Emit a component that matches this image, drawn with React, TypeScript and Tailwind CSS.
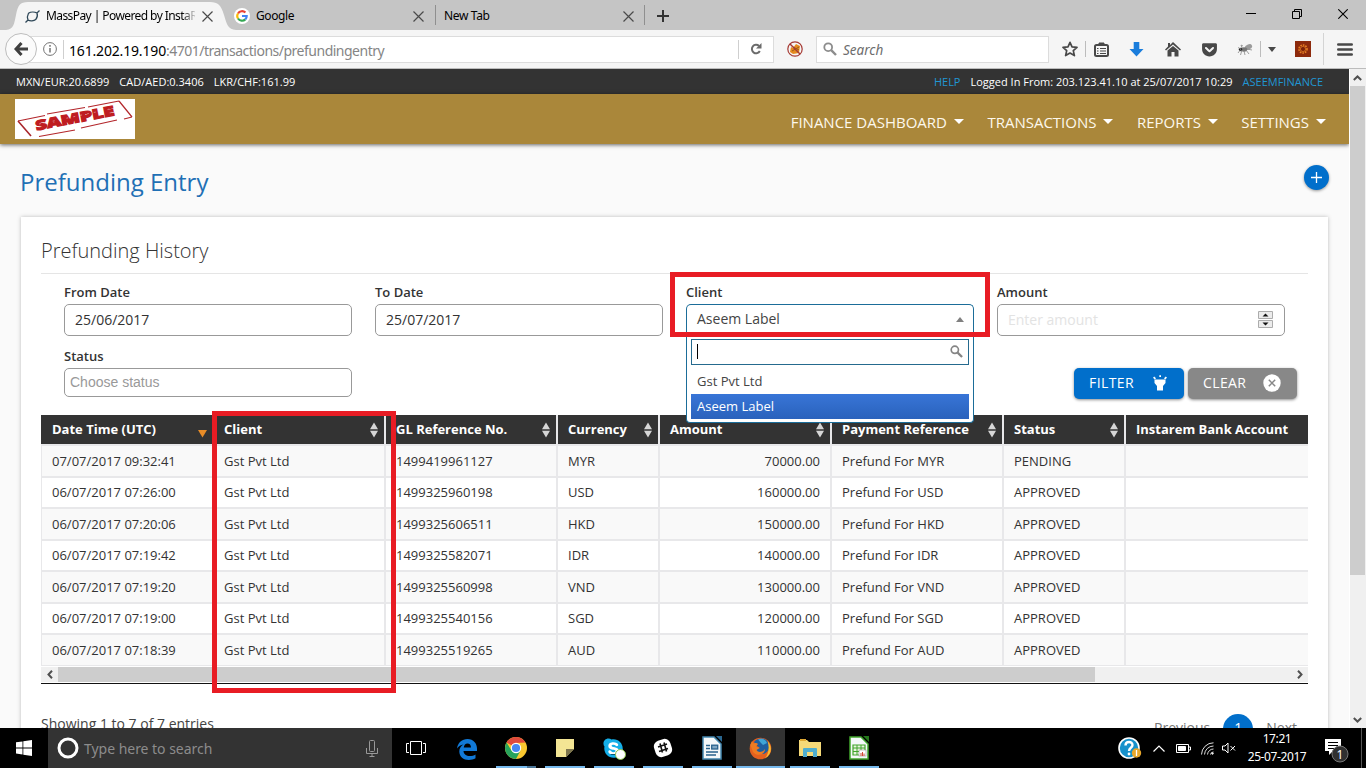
import type { ReactNode } from "react";
import { FaSkype, FaGetPocket } from "react-icons/fa";

type Column = { name: string; width: string; sort: "both" | "desc" | "none"; right?: boolean };

const columns: Column[] = [
  { name: "Date Time (UTC)", width: "w-[171px] border-l pl-[10px]", sort: "desc" },
  { name: "Client", width: "w-[172px] border-l-2 pl-[10px]", sort: "both" },
  { name: "GL Reference No.", width: "w-[172px] border-l-2 pl-[10px]", sort: "both" },
  { name: "Currency", width: "w-[102px] border-l-2 pl-[10px]", sort: "both" },
  { name: "Amount", width: "w-[172px] border-l-2 pl-[10px]", sort: "both", right: true },
  { name: "Payment Reference", width: "w-[172px] border-l-2 pl-[10px]", sort: "both" },
  { name: "Status", width: "w-[122px] border-l-2 pl-[10px]", sort: "both" },
  { name: "Instarem Bank Account", width: "flex-1 border-l-2 pl-[10px]", sort: "none" },
];

const entries = [
  ["07/07/2017 09:32:41", "Gst Pvt Ltd", "1499419961127", "MYR", "70000.00", "Prefund For MYR", "PENDING", ""],
  ["06/07/2017 07:26:00", "Gst Pvt Ltd", "1499325960198", "USD", "160000.00", "Prefund For USD", "APPROVED", ""],
  ["06/07/2017 07:20:06", "Gst Pvt Ltd", "1499325606511", "HKD", "150000.00", "Prefund For HKD", "APPROVED", ""],
  ["06/07/2017 07:19:42", "Gst Pvt Ltd", "1499325582071", "IDR", "140000.00", "Prefund For IDR", "APPROVED", ""],
  ["06/07/2017 07:19:20", "Gst Pvt Ltd", "1499325560998", "VND", "130000.00", "Prefund For VND", "APPROVED", ""],
  ["06/07/2017 07:19:00", "Gst Pvt Ltd", "1499325540156", "SGD", "120000.00", "Prefund For SGD", "APPROVED", ""],
  ["06/07/2017 07:18:39", "Gst Pvt Ltd", "1499325519265", "AUD", "110000.00", "Prefund For AUD", "APPROVED", ""],
];

function CloseX({ className = "" }: { className?: string }) {
  return (
    <svg className={`shrink-0 ${className}`} width="11" height="11" viewBox="0 0 11 11" stroke="#4a4a4a" strokeWidth="1.2">
      <path d="M.5.5l10 10M10.5.5l-10 10" />
    </svg>
  );
}

function Magnifier({ size, color }: { size: number; color: string }) {
  return (
    <svg className="shrink-0" width={size} height={size} viewBox="0 0 14 14" fill="none" stroke={color}>
      <circle cx="5.2" cy="5.2" r="3.9" strokeWidth="1.8" />
      <path d="M8.2 8.2l4.8 4.8" strokeWidth="2.4" />
    </svg>
  );
}

function TabStrip() {
  return (
    <div className="flex h-[30px] shrink-0 bg-[#c5c5c5] text-[12px] text-black">
      <div className="relative flex w-[232px] items-center pt-[2px]">
        <svg className="absolute left-0 top-0" width="240" height="30" viewBox="0 0 240 30">
          <path d="M6 30C14 29 14 24 16 15C18 5 20 2 28 2H210C218 2 221 5 224 15C227 25 228 29 236 30Z" fill="#f5f5f5" />
        </svg>
        <svg className="relative ml-[25px]" width="15" height="13" viewBox="0 0 15 13" fill="none" stroke="#2f4858" strokeWidth="1.3">
          <path d="M14.5 .5L12 3C10 2 6 1.500 3.500 3.200C2.500 5 2.300 8 3 10L.5 12.500M3 10C5 11.300 9 11 10.700 9.600C12 8 12.700 5 12 3" />
        </svg>
        <div className="relative ml-[6px] w-[149px] overflow-hidden whitespace-nowrap tracking-[-0.58px] [mask-image:linear-gradient(to_right,black_136px,transparent_151px)]">
          MassPay | Powered by InstaReM
        </div>
        <CloseX className="relative ml-[7px]" />
      </div>
      <div className="flex w-[203px] items-center pl-[2px] pt-[2px]">
        <span className="flex h-4 w-4 items-center justify-center rounded-full bg-white">
          <svg width="12" height="12" viewBox="0 0 12 12" fill="none" strokeWidth="2.200">
            <path d="M2 3.500A4.700 4.700 0 0 1 9.400 2.600" stroke="#ea4335" />
            <path d="M2 3.500A4.700 4.700 0 0 0 2 8.500" stroke="#fbbc05" />
            <path d="M2 8.500A4.700 4.700 0 0 0 9.300 9.400" stroke="#34a853" />
            <path d="M6 6H10.700A4.700 4.700 0 0 1 9.300 9.400" stroke="#4285f4" />
          </svg>
        </span>
        <span className="ml-[6px] flex-1 tracking-[-0.4px]">Google</span>
        <CloseX className="mr-[11px]" />
      </div>
      <div className="my-[5px] w-px bg-[#8f8f8f]" />
      <div className="flex w-[208px] items-center pl-[8px] pt-[2px]">
        <span className="flex-1 tracking-[-0.35px]">New Tab</span>
        <CloseX className="mr-[10px]" />
      </div>
      <div className="my-[5px] w-px bg-[#8f8f8f]" />
      <div className="flex flex-1 items-center pl-[12px] pt-[2px]">
        <svg width="12" height="12" viewBox="0 0 12 12" stroke="#333" strokeWidth="2"><path d="M6 0V12M0 6H12" /></svg>
      </div>
      <div className="flex items-start gap-[36px] pr-[18px] pt-[9px]">
        <svg width="10" height="10" viewBox="0 0 10 10" stroke="#000"><path d="M0 4.500H10" /></svg>
        <svg width="10" height="10" viewBox="0 0 10 10" fill="none" stroke="#000"><path d="M.5 2.500H7.500V9.500H.5ZM2.500 2.500V.5H9.500V7.500H7.500" /></svg>
        <svg width="10" height="10" viewBox="0 0 10 10" stroke="#000" strokeWidth="1.100"><path d="M.3.3L9.700 9.700M9.700.3L.3 9.700" /></svg>
      </div>
    </div>
  );
}

function Toolbar() {
  return (
    <div className="flex h-[39px] shrink-0 items-center border-b border-[#bcbcbc] bg-[#f5f5f5]">
      <div className="relative z-10 ml-[5px] flex h-8 w-8 items-center justify-center rounded-full border border-[#bdbdbd] bg-[#fbfbfb]">
        <svg width="14" height="14" viewBox="0 0 14 14" fill="none" stroke="#404040" strokeWidth="3"><path d="M7.500 1L2 7L7.500 13M2 7H14" /></svg>
      </div>
      <div className="-ml-[17px] flex h-[27px] w-[754px] items-center border border-[#dcdcdc] bg-white pl-[22px]">
        <svg width="14" height="14" viewBox="0 0 14 14" fill="none" stroke="#737373"><circle cx="7" cy="7" r="6.400" /><path d="M7 6V10.500M7 3V4.800" strokeWidth="1.500" /></svg>
        <div className="ml-[6px] h-[19px] w-px bg-[#cfcfcf]" />
        <div className="ml-[5px] flex-1 whitespace-nowrap pt-[2px] text-[14px] tracking-[-0.5px] text-[#858585]">
          <span className="tracking-[-0.17px] text-black">161.202.19.190</span>:4701/transactions/prefundingentry
        </div>
        <div className="h-[19px] w-px bg-[#cfcfcf]" />
        <svg className="mx-[11px]" width="12" height="12" viewBox="0 0 12 12"><path d="M9.800 8A4.200 4.200 0 1 1 9 3" fill="none" stroke="#6b6b6b" strokeWidth="2" /><path d="M11.500 0V5.500H6Z" fill="#6b6b6b" /></svg>
      </div>
      <svg className="ml-[13px]" width="16" height="16" viewBox="0 0 16 16">
        <path d="M4 6L6 7L9 3L13 5L12 12L6 13L3 11Z" fill="#e58a1f" /><path d="M6 6L12 9M5 10L12 6" stroke="#9a5a15" />
        <circle cx="8" cy="8" r="7.200" fill="none" stroke="#a63a34" strokeWidth="1.200" /><path d="M3 3L13 13" stroke="#a63a34" strokeWidth="1.400" />
      </svg>
      <div className="ml-[13px] flex h-[27px] w-[233px] items-center border border-[#dcdcdc] bg-white pl-[6px]">
        <Magnifier size={14} color="#8c8c8c" />
        <span className="ml-[6px] pt-[2px] text-[13.5px] italic text-[#6d6d6d]">Search</span>
      </div>
      <svg className="ml-[13px]" width="16" height="16" viewBox="0 0 16 16" fill="none" stroke="#484848" strokeWidth="1.700" strokeLinejoin="round"><path d="M8 1.300L10 5.800L15 6.300L11.300 9.600L12.400 14.600L8 12L3.600 14.600L4.700 9.600L1 6.300L6 5.800Z" /></svg>
      <div className="ml-[7px] h-4 w-px bg-[#bcbcbc]" />
      <svg className="ml-[8px]" width="15" height="15" viewBox="0 0 15 15" fill="none" stroke="#484848"><rect x="1" y="3" width="13" height="11" rx="1.500" strokeWidth="2" /><path d="M5 1H10V3H5Z" fill="#484848" /><path d="M3 6.500H4.500M6 6.500H12M3 9H4.500M6 9H12M3 11.500H4.500M6 11.500H12" strokeWidth="1.100" /></svg>
      <svg className="ml-[20px]" width="15" height="15" viewBox="0 0 15 15" fill="#1a7ddc"><path d="M4.700 0H10.300V7H14.500L7.500 14.500L.5 7H4.700Z" /></svg>
      <svg className="ml-[21px]" width="16" height="15" viewBox="0 0 16 15" fill="#484848"><path d="M8 0L16 7.500L15 8.500L8 2.500L1 8.500L0 7.500L3 4.600V1H5V3Z" /><path d="M8 4L13.500 8.500V14.500H9.500V10H6.500V14.500H2.500V8.500Z" /></svg>
      <FaGetPocket className="ml-[20px]" size={17} color="#484848" />
      <svg className="ml-[19px]" width="16" height="13" viewBox="0 0 16 13"><ellipse cx="11.500" cy="4" rx="3.800" ry="2.600" fill="#9b9b9b" transform="rotate(-25 11.500 4)" /><ellipse cx="7" cy="6.500" rx="3.200" ry="2.200" fill="#777" /><circle cx="3.500" cy="6.500" r="1.700" fill="#222" /><path d="M1 4.500L4 6L1 10M5 7L3.500 12M7 8L8 12M9 7L12 11M5 5L4 2L6 3M10 6L15 7" fill="none" stroke="#888" strokeWidth=".8" /></svg>
      <div className="ml-[7px] h-4 w-px bg-[#bcbcbc]" />
      <svg className="ml-[7px]" width="8" height="5" viewBox="0 0 8 5" fill="#484848"><path d="M0 0H8L4 5Z" /></svg>
      <svg className="ml-[19px]" width="16" height="16" viewBox="0 0 16 16"><rect width="16" height="16" fill="#8d2a0c" /><circle cx="8" cy="8" r="4" fill="none" stroke="#e98124" strokeWidth="1.600" strokeDasharray="1.600 1" /><circle cx="8" cy="8" r="2.600" fill="#7b2108" stroke="#e98124" strokeWidth=".7" /></svg>
      <div className="ml-[12px] h-8 w-px bg-[#d4d4d4]" />
      <svg className="ml-[13px]" width="16" height="13" viewBox="0 0 16 13" stroke="#484848" strokeWidth="2.600" strokeLinecap="round"><path d="M1.300 1.500H14.700M1.300 6.500H14.700M1.300 11.500H14.700" /></svg>
    </div>
  );
}

function SiteHeader() {
  return (
    <header className="shrink-0">
      <div className="flex h-[25px] items-center bg-[#333] px-4 pt-[2px] text-[11px] text-white">
        <div className="flex flex-1 gap-[10px] whitespace-nowrap tracking-[0.02px]">
          <span>MXN/EUR:20.6899</span><span>CAD/AED:0.3406</span><span>LKR/CHF:161.99</span>
        </div>
        <div className="mr-[10px] flex gap-[10px] whitespace-nowrap">
          <span className="text-[#2196d3]">HELP</span>
          <span>Logged In From: 203.123.41.10 at 25/07/2017 10:29</span>
          <span className="text-[#2196d3]">ASEEMFINANCE</span>
        </div>
      </div>
      <div className="relative flex h-[50px] items-center bg-[#aa873a] pl-[15px] pr-[23px] shadow-[0_1px_4px_rgba(0,0,0,0.6)]">
        <svg width="120" height="40" viewBox="0 0 120 40">
          <rect width="120" height="40" fill="#fff" />
          <path d="M3 22L30 16.500M32 15L70 8.500M73 8L104 2M104 2L117 18M117 18L109 20M102 21L66 29M60 31L24 37.500" fill="none" stroke="#b3262b" strokeWidth="1.200" />
          <path d="M3 22L16 37" stroke="#a8252a" strokeWidth="1.600" />
          <text x="21.500" y="31.500" transform="rotate(-11 21.500 31.500)" fill="#bf1c21" stroke="#bf1c21" strokeWidth="1.100" fontFamily="Open Sans, sans-serif" fontWeight="800" fontSize="13.500" textLength="80" lengthAdjust="spacingAndGlyphs">SAMPLE</text>
          <path d="M24 25L100 9" stroke="#fff" strokeWidth=".4" strokeDasharray="2 5" />
        </svg>
        <nav className="mt-[7px] flex flex-1 justify-end gap-[23.400px] text-[15px] text-[#fdf8ec]">
          {["FINANCE DASHBOARD", "TRANSACTIONS", "REPORTS", "SETTINGS"].map((item) => (
            <div key={item} className="flex items-center">
              <span>{item}</span>
              <svg className="-mt-[2px] ml-[7px]" width="10" height="5" viewBox="0 0 10 5" fill="#fff"><path d="M0 0H10L5 5Z" /></svg>
            </div>
          ))}
        </nav>
      </div>
    </header>
  );
}

function Field({ label, children }: { label: string; children: ReactNode }) {
  return (
    <div className="w-[288px]">
      <div className="h-[20px] text-[13px] font-semibold leading-[16px] text-[#333]">{label}</div>
      {children}
    </div>
  );
}

function Filters() {
  return (
    <div className="px-[23px] pt-[10px]">
      <div className="flex gap-[23px]">
        <Field label="From Date">
          <div className="flex h-[32px] items-center rounded-[5px] border border-[#999] pb-[2px] pl-[10px] text-[14px] text-[#333]">25/06/2017</div>
        </Field>
        <Field label="To Date">
          <div className="flex h-[32px] items-center rounded-[5px] border border-[#999] pb-[2px] pl-[10px] text-[14px] text-[#333]">25/07/2017</div>
        </Field>
        <Field label="Client">
          <div className="relative">
            <div className="flex h-[32px] items-center rounded-t-[5px] border border-b-0 border-[#1b6d99] pb-[2px] pl-[10px] pr-[9px] text-[14px] text-[#444]">
              <span className="-mt-[2px] flex-1">Aseem Label</span>
              <svg width="8" height="5" viewBox="0 0 8 5" fill="#808080"><path d="M0 5H8L4 0Z" /></svg>
            </div>
            <div className="absolute left-0 top-[32px] z-20 h-[87px] w-full rounded-b-[4px] border border-t-0 border-[#1b6d99] bg-white px-[4px] pt-[3px] text-[13px] text-[#444]">
              <div className="flex h-[26px] items-center border border-[#256a8e] pb-[2px] pl-[5px] pr-[5px]">
                <div className="h-[15px] w-px bg-black" />
                <div className="flex-1" />
                <Magnifier size={13} color="#858585" />
              </div>
              <div className="mt-[4px] flex h-[25px] items-center pl-[6px]">Gst Pvt Ltd</div>
              <div className="flex h-[25px] items-center bg-linear-to-b from-[#3875d7] to-[#2a62bc] pl-[6px] text-white">Aseem Label</div>
            </div>
          </div>
        </Field>
        <Field label="Amount">
          <div className="flex h-[32px] items-center rounded-[5px] border border-[#999] pb-[2px] pl-[10px] pr-[11px] text-[14px] text-[#e3e3e3]">
            <span className="flex-1">Enter amount</span>
            <svg className="mt-px" width="15" height="17" viewBox="0 0 15 17"><path d="M.5 .5H14.500V7.500H.5ZM.5 9.500H14.500V16.500H.5Z" fill="#ececec" stroke="#acacac" /><path d="M4.500 5.500H10.500L7.500 2.500ZM4.500 11.500H10.500L7.500 14.500Z" fill="#111" /></svg>
          </div>
        </Field>
      </div>
      <div className="mt-[12px] flex justify-between">
        <Field label="Status">
          <div className="flex h-[29px] items-center rounded-[5px] border border-[#999] pl-[5px] font-['Liberation_Sans'] text-[14px] text-[#999]">Choose status</div>
        </Field>
        <div className="-mr-[12px] mt-[20px] flex gap-[4px] text-[14px] tracking-[0.4px] text-white">
          <div className="flex h-[31px] w-[110px] items-center justify-between rounded-[5px] bg-[#016fcb] pb-[2px] pl-[15px] pr-[17px] shadow-[0_1px_3px_rgba(0,0,0,0.45)]">
            FILTER
            <svg width="14" height="16" viewBox="0 0 14 16" fill="#fff"><path d="M1.500 4.500H12.500V8L10 11V15.500H4V11L1.500 8Z" /><path d="M6.300 .3h1.700v1.700h-1.700ZM0 2.700L1.200 1.500L3 3.300L1.800 4.500ZM14 2.700L12.800 1.500L11 3.300L12.200 4.500Z" /></svg>
          </div>
          <div className="flex h-[31px] w-[109px] items-center justify-between rounded-[5px] bg-[#888] pb-[2px] pl-[15px] pr-[16px] shadow-[0_1px_3px_rgba(0,0,0,0.45)]">
            CLEAR
            <svg width="18" height="18" viewBox="0 0 18 18"><circle cx="9" cy="9" r="8.700" fill="#fff" /><path d="M5.800 5.800L12.200 12.200M12.200 5.800L5.800 12.200" stroke="#888" strokeWidth="1.500" /></svg>
          </div>
        </div>
      </div>
    </div>
  );
}

function EntriesTable() {
  return (
    <div className="mt-[16px] text-[13px]">
      <div className="flex h-[29px] bg-[#333] font-bold text-white">
        {columns.map((c) => (
          <div key={c.name} className={`flex shrink-0 items-center whitespace-nowrap ${c.name.startsWith("Date") ? "border-[#333]" : "border-[#e8e8ea]"} ${c.width}`}>
            <span className="flex-1">{c.name}</span>
            {c.sort === "both" && (
              <svg className="mr-[5px]" width="10" height="16" viewBox="0 0 10 16" fill="#d6d6d6"><path d="M1 7.200H9L5 .5ZM1 8.800H9L5 15.500Z" /></svg>
            )}
            {c.sort === "desc" && (
              <svg className="mr-[5px] mt-[8px]" width="9" height="8" viewBox="0 0 9 8" fill="#e88c27"><path d="M0 0H9L4.500 7.500Z" /></svg>
            )}
          </div>
        ))}
      </div>
      <div className="h-[2px] bg-[#e8e8ea]" />
      {entries.map((row, r) => (
        <div
          key={row[0]}
          className={`flex border-[#e8e8ea] text-[#333] ${r === 6 ? "h-[31px] border-b" : r % 2 ? "h-[31px] border-b-2" : "h-[32px] border-b-2"} ${r % 2 ? "bg-white" : "bg-[#f9f9f9]"}`}
        >
          {row.map((cell, i) => (
            <div key={i} className={`flex shrink-0 items-center whitespace-nowrap border-[#e8e8ea] ${r % 2 ? "" : "pt-px"} ${columns[i].width} ${columns[i].right ? "justify-end pr-[10px]" : ""}`}>
              {cell}
            </div>
          ))}
        </div>
      ))}
      <div className="mt-px flex h-[15px] items-center bg-[#f0f0f0]">
        <div className="flex w-[17px] justify-center">
          <svg width="6" height="9" viewBox="0 0 6 9" fill="none" stroke="#505050" strokeWidth="2"><path d="M5 .8L1.500 4.500L5 8.200" /></svg>
        </div>
        <div className="h-full w-[1037px] bg-[#cdcdcd]" />
        <div className="flex flex-1 justify-end pr-[5px]">
          <svg width="6" height="9" viewBox="0 0 6 9" fill="none" stroke="#505050" strokeWidth="2"><path d="M1 .8L4.500 4.500L1 8.200" /></svg>
        </div>
      </div>
      <div className="mt-px h-px bg-[#111]" />
    </div>
  );
}

function Page() {
  return (
    <div className="flex min-h-0 flex-1">
      <div className="flex w-[1349px] flex-col overflow-hidden bg-[#fafafa]">
        <SiteHeader />
        <div className="flex h-[73px] shrink-0 justify-between pl-5 pr-5">
          <h1 className="mt-[22px] text-[24px] leading-[32px] text-[#1f70b5]">Prefunding Entry</h1>
          <div className="mt-[21px] flex h-[25px] w-[25px] items-center justify-center rounded-full bg-[#016fcb] shadow-[0_1px_3px_rgba(0,0,0,0.4)]">
            <svg width="11" height="11" viewBox="0 0 11 11" stroke="#fff" strokeWidth="1.300"><path d="M5.500 0V11M0 5.500H11" /></svg>
          </div>
        </div>
        <section className="ml-[21px] h-[560px] w-[1307px] shrink-0 bg-white pl-[20px] pr-[20px] shadow-[0_0_4px_rgba(0,0,0,0.25)]">
          <h2 className="h-[57px] border-b border-[#e5e5e5] pt-[19px] text-[20px] font-light leading-[30px] text-[#333]">Prefunding History</h2>
          <Filters />
          <EntriesTable />
          <div className="mt-[29px] flex justify-between text-[14px] text-[#444]">
            <span className="leading-[22px]">Showing 1 to 7 of 7 entries</span>
            <div className="mr-[11px] mt-[1px] flex h-[30px] items-center text-[14px] text-[#757575]">
              <span className="pb-[4px]">Previous</span>
              <span className="mx-[13px] flex h-[30px] w-[30px] items-center justify-center rounded-full bg-[#016fcb] pb-[3px] text-white">1</span>
              <span className="pb-[4px]">Next</span>
            </div>
          </div>
        </section>
      </div>
      <div className="flex flex-1 flex-col items-center border-l border-white bg-[#f0f0f0] pr-px">
        <svg className="mt-[6px] shrink-0" width="9" height="6" viewBox="0 0 9 6" fill="none" stroke="#505050" strokeWidth="2"><path d="M.8 5L4.500 1.500L8.200 5" /></svg>
        <div className="mt-[5px] h-[489px] w-full bg-[#cdcdcd]" />
        <svg className="mb-[5px] mt-auto shrink-0" width="9" height="6" viewBox="0 0 9 6" fill="none" stroke="#505050" strokeWidth="2"><path d="M.8 1L4.500 4.500L8.200 1" /></svg>
      </div>
    </div>
  );
}

function DocIcon({ color, fill, sheet }: { color: string; fill: string; sheet?: boolean }) {
  return (
    <svg width="20" height="24" viewBox="0 0 20 24">
      <path d="M1 1H12L19 8V23H1Z" fill="#f4f8f9" stroke={color} strokeWidth="1.500" />
      <path d="M14 0H20V6Z" fill={fill} />
      {sheet ? (
        <>
          <path d="M4 9H16V19H4Z" fill="#e8f5df" stroke={color} strokeWidth="1.200" /><path d="M4 12H16M4 15.500H16M8 9V19M12 9V19" stroke={color} />
          <rect x="10" y="14" width="7" height="6" fill="#fff" stroke="#999" strokeWidth=".6" /><path d="M12 20V17M13.500 20V16M15 20V17.500" stroke="#d14b36" />
        </>
      ) : (
        <><path d="M4 9.500H8M4 12.500H8M4 16H16M4 19H14" stroke="#28628c" strokeWidth="1.500" /><rect x="9.700" y="9.200" width="6" height="3.800" fill="#7fa6c2" stroke="#28628c" strokeWidth="1.300" /></>
      )}
    </svg>
  );
}

function TaskItem({ children, underline = true, active = false, stacked = false }: { children: ReactNode; underline?: boolean; active?: boolean; stacked?: boolean }) {
  return (
    <div className={`flex h-full w-[49px] flex-col items-center ${active ? "bg-[#333]" : ""}`}>
      <div className="flex flex-1 items-center pt-[2px]">{children}</div>
      {underline && (
        <div className={`flex h-[2px] justify-end bg-[#76b9ed] ${active ? "w-full" : "w-[40px]"}`}>
          {stacked && <div className="h-full w-[9px] bg-[#4b7698]" />}
        </div>
      )}
    </div>
  );
}

function Taskbar() {
  return (
    <div className="flex h-[40px] shrink-0 items-center bg-black text-white">
      <div className="flex w-[48px] justify-center">
        <svg width="16" height="16" viewBox="0 0 16 16" fill="#fff"><path d="M0 2.300L6.500 1.400V7.500H0ZM7.300 1.300L16 0V7.500H7.300ZM0 8.400H6.500V14.500L0 13.600ZM7.300 8.400H16V16L7.300 14.700Z" /></svg>
      </div>
      <div className="flex h-full w-[344px] items-center bg-[#333] pl-[9px] pr-[14px]">
        <svg width="22" height="22" viewBox="0 0 22 22" fill="none"><circle cx="11" cy="11" r="9" stroke="#fff" strokeWidth="3" /></svg>
        <span className="ml-[5px] flex-1 text-[14px] tracking-[-0.03px] text-[#8c8c8c]">Type here to search</span>
        <svg width="12" height="17" viewBox="0 0 12 17" fill="none" stroke="#999"><rect x="3.500" y=".5" width="5" height="11" rx="1" /><path d="M.5 8V13.500H11.500V8M6 13.500V16M3.500 16.500H8.500" /></svg>
      </div>
      <div className="flex w-[50px] pl-[14px]">
        <svg width="20" height="14" viewBox="0 0 20 14" fill="none" stroke="#fff"><path d="M4.500.5H15.500V13.500H4.500ZM3 2.500H.5V11.500H3M17 2.500H19.500V11.500H17" /></svg>
      </div>
      <TaskItem underline={false}>
        <svg width="20" height="21" viewBox="0 0 20 21" fill="#1179d7"><path d="M0 9.500C1 3.500 5 0 10.500 0C16.500 0 20 4.500 20 9.500V12H6.500C6.700 15.500 9.500 17 12.500 17C15 17 17 16.300 18.500 15.400V19.300C16.700 20.400 14.300 21 11.800 21C6.500 21 2.300 17.500 2.300 12.500C2.300 9.500 3.800 7 6.500 5.500C3.800 6 1.600 7.300 0 9.500ZM6.700 8.500H14C14 6 12.700 4.400 10.500 4.400C8.400 4.400 7.100 6 6.700 8.500Z" /></svg>
      </TaskItem>
      <TaskItem stacked>
        <svg width="22" height="22" viewBox="0 0 22 22"><circle cx="11" cy="11" r="11" fill="#fbc82f" /><path d="M11 11L1.500 5.500A11 11 0 0 1 20.500 5.500L11 6Z" fill="#df4a3c" /><path d="M1.500 5.500A11 11 0 0 0 11 22L15.500 13.500L11 16L6.500 13.500Z" fill="#27a35c" /><circle cx="11" cy="11" r="5.200" fill="#fff" /><circle cx="11" cy="11" r="4.100" fill="#4688f1" /></svg>
      </TaskItem>
      <TaskItem><svg width="18" height="18" viewBox="0 0 18 18"><path d="M0 0H18V10L10 18H0Z" fill="#f3e594" /><path d="M10 18V10H18Z" fill="#7c744d" /></svg></TaskItem>
      <TaskItem>
        <div className="relative"><div className="absolute left-[5px] top-[5px] h-[12px] w-[12px] bg-white" /><FaSkype className="relative" size={23} color="#14aee8" /><span className="absolute -right-[1px] bottom-0 h-[11px] w-[11px] rounded-full border border-[#8cc34b] bg-white" /></div>
      </TaskItem>
      <TaskItem>
        <svg width="20" height="20" viewBox="0 0 20 20"><rect x="1.500" y="1.500" width="17" height="17" rx="6" fill="#fff" transform="rotate(-18 10 10)" /><path d="M7 5.500L9.500 14.500M11 4.500L13.500 13.500M5 9L14 6M6 13.500L15 10.500" stroke="#111" strokeWidth="1.600" /></svg>
      </TaskItem>
      <TaskItem><DocIcon color="#4387ae" fill="#2a6790" /></TaskItem>
      <TaskItem active>
        <svg width="23" height="23" viewBox="0 0 23 23"><circle cx="11.500" cy="11.500" r="10.800" fill="#e4601f" /><path d="M5 5C8 .5 16 0 19 5C22 10 19 16 14 17C10 17.500 7 15 7 12L11 11L8 9Z" fill="#1f5f9f" /><path d="M9 2.500C13 .5 17 2.500 18 6L14 8L12 6Z" fill="#3fa6d6" /><path d="M1.300 8L3 4L4.500 6.500C6 5.500 8 6 9 7L7 9.500L10.500 11L7.500 13C9 16 14 15.500 16 12C16 18 8 20 4 15Z" fill="#ee7b22" /><path d="M18.500 4C24 10 22.500 18 16 21.500C20 16 20.500 10 18.500 4Z" fill="#f8bd31" /></svg>
      </TaskItem>
      <TaskItem><svg width="22" height="18" viewBox="0 0 22 18"><path d="M0 1H8L10 3H22V17H0Z" fill="#f5d978" /><path d="M1 0H7V2H1Z" fill="#e0a934" /><path d="M4 18V10Q4 9 5 9H17Q18 9 18 10V18H14V13H8V18Z" fill="#4fadce" /></svg></TaskItem>
      <TaskItem><DocIcon color="#41a52c" fill="#24781b" sheet /></TaskItem>
      <div className="flex-1" />
      <svg width="24" height="22" viewBox="0 0 24 22"><circle cx="11" cy="11" r="10" fill="#1791cb" stroke="#fff" strokeWidth="1.600" /><path d="M7.500 8.500C7.500 4 14.500 4 14.500 8C14.500 11 11 10.500 11 14" fill="none" stroke="#fff" strokeWidth="2.400" /><circle cx="11" cy="17" r="1.400" fill="#fff" /><circle cx="18.500" cy="16" r="4.700" fill="#e8a72b" /><path d="M18.500 13V19" stroke="#fff" strokeWidth="1.300" /></svg>
      <svg className="ml-[11px]" width="12" height="7" viewBox="0 0 12 7" fill="none" stroke="#fff" strokeWidth="1.200"><path d="M.5 6.500L6 1L11.500 6.500" /></svg>
      <svg className="ml-[11px]" width="15" height="9" viewBox="0 0 15 9" fill="none" stroke="#fff"><path d="M.5.5H12.500V8.500H.5ZM13 3H14.500V6H13" /><path d="M2.500 2.500H9.500V6.500H2.500Z" fill="#fff" /></svg>
      <svg className="ml-[10px]" width="13" height="13" viewBox="0 0 13 13" fill="none" stroke="#ddd"><path d="M.5 12.500A12 12 0 0 1 12.500 .8M3.500 12.500A9 9 0 0 1 12.500 4M6.500 12.500A6 6 0 0 1 12.500 7M9.500 12.500A3 3 0 0 1 12.500 10" /><circle cx="11.500" cy="11.500" r=".8" fill="#fff" /></svg>
      <svg className="ml-[8px]" width="14" height="12" viewBox="0 0 14 12" fill="none" stroke="#fff"><path d="M.5 4H3L6 1V11L3 8H.5ZM8.500 4L13 8.500M13 4L8.500 8.500" /></svg>
      <div className="ml-[8px] w-[66px] text-center text-[12px] leading-[18px] tracking-[-0.4px]"><div>17:21</div><div>25-07-2017</div></div>
      <svg className="ml-[14px] mr-[11px] mt-[4px]" width="26" height="26" viewBox="0 0 26 26"><path d="M1 2H17V14H9L5 18V14H1Z" fill="#fff" /><path d="M4 5.500H14M4 8.500H14M4 11.500H10" stroke="#000" /><circle cx="16" cy="17" r="8" fill="#303030" stroke="#777" /><text x="16" y="21.500" textAnchor="middle" fill="#fff" fontSize="12" fontFamily="Noto Sans, sans-serif">1</text></svg>
      <div className="mr-[4px] h-full w-px bg-[#555]" />
    </div>
  );
}

export default function App() {
  return (
    <div className="relative flex h-[768px] w-[1366px] flex-col overflow-hidden bg-white font-['Open_Sans',sans-serif]">
      <div className="contents font-['Noto_Sans',sans-serif]"><TabStrip /><Toolbar /></div>
      <Page />
      <div className="contents font-['Noto_Sans',sans-serif]"><Taskbar /></div>
      <div className="pointer-events-none absolute left-[670px] top-[272px] z-30 h-[65px] w-[320px] border-[5px] border-[#e81c24]" />
      <div className="pointer-events-none absolute left-[212px] top-[411px] z-30 h-[282px] w-[184px] border-[5px] border-[#e81c24]" />
    </div>
  );
}
